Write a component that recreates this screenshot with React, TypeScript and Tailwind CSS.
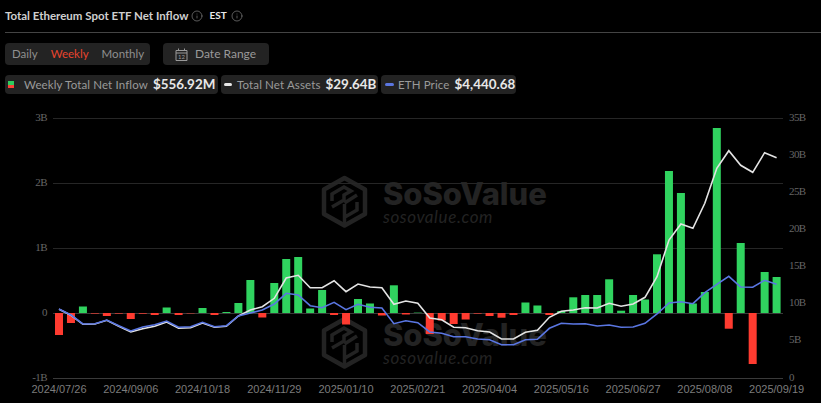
import React from "react";
import { Info } from "lucide-react";

const bars = [-22,-10,6.5,-0.6,-3,-0.6,-6,-0.7,-2,5.5,-2,-0.4,5,-2,1,10,33,-4.5,30,54,56,4.5,23,-2,-11.5,14,9.5,-2.5,27.7,-1.5,0.4,-21,-7.5,-11,-6.5,-0.6,-3,-4.7,-2,10.5,7.5,-2,2,15.7,18,18,33.7,2.3,18,13.5,58.7,142,120,9.5,21,185,-15.7,70,-51,41,36];
const whiteY = [309.3,315.3,324.3,324,320.3,326.3,332,328.7,326.3,322,328.3,327.7,323,327.3,326.3,316,310,306.7,298.3,278,275.3,287.7,287.7,280.7,291.7,284,287,287.7,304.3,301,303.3,318,319.7,327.3,327.7,330.7,332,339,339,332.3,330.3,317.3,311.3,310,307.7,308,303.3,306.3,304,297.3,276.7,240,224,228.3,203.3,168.3,150.7,165.3,172.3,152.7,157.7];
const blueY = [309,315,324,323.7,320,325.7,331,327,324.7,321,327.3,326.7,322.3,326.7,325.7,316,313,310,304,293.3,295,305.7,307.7,302.3,309.7,304.3,307.3,308,323.7,320.7,322.7,332,333.3,336.7,336.7,339,339.7,344.7,344.7,339.7,339.3,328.3,323.3,324,323.7,326,325,327.3,327,323.3,314,303,301.7,303.7,292.7,284.3,276.3,287,287.3,280.3,284.3];

const cx = (i: number) => 59 + i * 11.96;
const pts = (ys: number[]) => ys.map((y, i) => `${cx(i).toFixed(1)},${y}`).join(" ");
const dates = ["2024/07/26","2024/09/06","2024/10/18","2024/11/29","2025/01/10","2025/02/21","2025/04/04","2025/05/16","2025/06/27","2025/08/08","2025/09/19"];
const left: [string, number][] = [["3B",118],["2B",183],["1B",248],["0",313],["-1B",378]];
const right: [string, number][] = [["35B",118],["30B",155],["25B",192],["20B",229],["15B",266],["10B",303],["5B",340],["0",378]];

function Mark({ y }: { y: number }) {
  return (
    <g transform={`translate(0 ${y})`} fill="none" stroke="#232323">
      <path d="M344.500 2 L365 13.500 L365 38 L344.500 49.500 L324 38 L324 13.500 Z" strokeWidth="4.500" strokeLinejoin="round" />
      <path d="M332 25 V18 L344 11 L351 15 L344 19 V24 L332 31 M344.500 28 V48 M357 26 V34 L345 41 M357 19 L344.500 27" strokeWidth="3.500" />
      <text x="383" y="29" fill="#232323" stroke="none" fontSize="31" fontWeight="800" fontFamily="Inter, sans-serif" letterSpacing="-0.1">SoSoValue</text>
      <text x="383" y="47" fill="#232323" stroke="none" fontSize="17" fontStyle="italic" fontFamily="Lato, sans-serif" letterSpacing="0.6">sosovalue.com</text>
    </g>
  );
}

function Pill({ swatch, label, value, className }: { swatch: React.ReactNode; label: string; value: string; className: string }) {
  return (
    <div className={`flex h-[19px] items-center whitespace-nowrap rounded bg-[#232323] ${className}`}>
      {swatch}
      <span className="text-[11.5px] leading-none tracking-[0.13px] text-[#9a9a9a]">{label}</span>
      <span className="ml-[5px] text-[13.4px] font-bold leading-none text-[#e8e8e8]">{value}</span>
    </div>
  );
}

export default function App() {
  return (
    <div className="h-[403px] w-[821px] overflow-hidden bg-black font-['Lato',sans-serif]">
      <div className="flex h-[32px] items-center pb-[1px] pl-[5px]">
        <span className="text-[11.5px] font-bold text-[#cfcfcf]">Total Ethereum Spot ETF Net Inflow</span>
        <Info className="ml-[3px] h-[12px] w-[12px] text-[#777]" strokeWidth={1.5} />
        <span className="ml-[6px] text-[10px] font-bold text-[#e8e8e8]">EST</span>
        <Info className="ml-[4px] h-[12px] w-[12px] text-[#777]" strokeWidth={1.5} />
      </div>
      <div className="ml-[5px] h-px bg-[#444444]" />
      <div className="mt-[10px] flex h-[22px] gap-[13px] pl-[5px]">
        <div className="flex w-[145px] items-center gap-[13px] rounded bg-[#232323] pl-[7px] text-[11.5px] text-[#8f8f8f]">
          <span>Daily</span>
          <span className="text-[#e8432e]">Weekly</span>
          <span>Monthly</span>
        </div>
        <div className="flex w-[106px] items-center gap-[7px] rounded bg-[#232323] pl-[12px] text-[12px] text-[#9a9a9a]">
          <svg width="13" height="13" viewBox="0 0 13 13" fill="none" stroke="#9a9a9a" strokeWidth="1">
            <path d="M1 2.500H12V12.500H1Z M1 5H12 M3.500 0.500V3 M9.500 0.500V3" />
            <text x="6.500" y="11" textAnchor="middle" fontSize="6" fill="#9a9a9a" stroke="none">12</text>
          </svg>
          <span>Date Range</span>
        </div>
      </div>
      <div className="mt-[10px] flex gap-[3px] pl-[5px]">
        <Pill
          className="w-[213px] pl-[3px]"
          label="Weekly Total Net Inflow"
          value="$556.92M"
          swatch={
            <span className="mr-[10px] flex w-[6px] shrink-0 flex-col">
              <span className="h-[3.5px] bg-[#2ecc5e]" />
              <span className="h-[3.5px] bg-[#ff4136]" />
            </span>
          }
        />
        <Pill
          className="w-[157px] pl-[3px]"
          label="Total Net Assets"
          value="$29.64B"
          swatch={<span className="mr-[5px] h-[3px] w-[8px] shrink-0 rounded-sm bg-[#e8e8e8]" />}
        />
        <Pill
          className="w-[135px] pl-[4px]"
          label="ETH Price"
          value="$4,440.68"
          swatch={<span className="mr-[4px] h-[3px] w-[9px] shrink-0 rounded-sm bg-[#5b76e0]" />}
        />
      </div>
      <svg className="mt-[6px] block" width="821" height="303" viewBox="0 100 821 303">
        <Mark y={176} />
        <Mark y={317} />
        {left.map(([, y]) => (
          <line key={y} x1="53" x2="783" y1={y + 0.5} y2={y + 0.5} stroke={y === 378 || y === 313 ? "#3a3a3a" : "#262626"} />
        ))}
        {bars.map((v, i) => (
          <rect
            key={i}
            x={cx(i) - 4}
            y={v > 0 ? 313 - v : 313}
            width="8"
            height={Math.abs(v)}
            fill={v > 0 ? "#30d35f" : "#ff3b30"}
          />
        ))}
        <polyline points={pts(whiteY)} fill="none" stroke="#e4e4e4" strokeWidth="1.6" />
        <polyline points={pts(blueY)} fill="none" stroke="#5a76e2" strokeWidth="1.6" />
        <g fontFamily="'Liberation Serif', serif" fontSize="11" fill="#666666" letterSpacing="-0.6">
          {left.map(([t, y]) => (
            <text key={t} x="47" y={y + 3} textAnchor="end">{t}</text>
          ))}
          {right.map(([t, y]) => (
            <text key={t + y} x="789" y={y + 3}>{t}</text>
          ))}
        </g>
        <g fontFamily="'Liberation Sans', sans-serif" fontSize="11" fill="#7c7c7c">
          {dates.map((d, i) => (
            <text key={d} x={59 + i * 71.76} y="393" textAnchor="middle">{d}</text>
          ))}
        </g>
      </svg>
    </div>
  );
}
